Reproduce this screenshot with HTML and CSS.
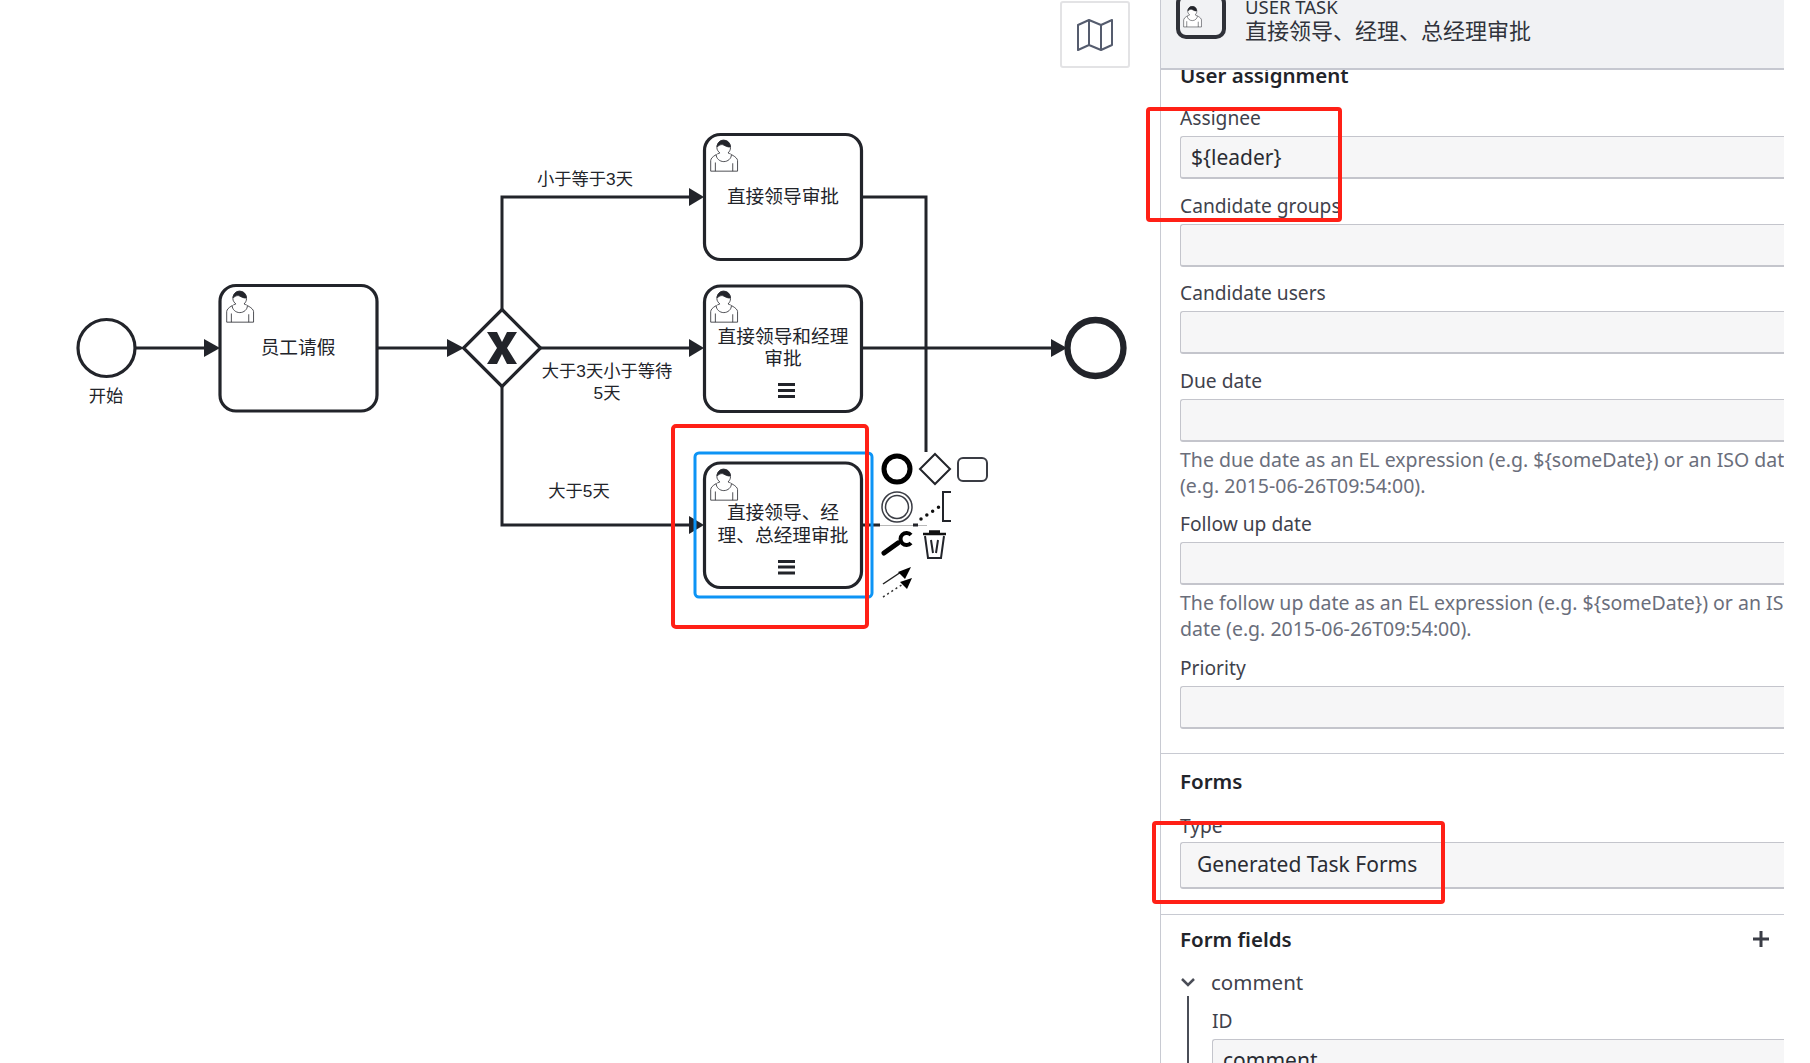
FILE: index.html
```html
<!DOCTYPE html>
<html lang="zh">
<head>
<meta charset="utf-8">
<title>BPMN editor</title>
<link rel="stylesheet" href="styles.css">
</head>
<body>
<div class="page">
  <main class="canvas">
    <svg class="diagram" width="1160" height="1063" viewBox="0 0 1160 1063" xmlns="http://www.w3.org/2000/svg">
      <defs>
        <g id="user-marker">
          <path class="um-body" d="M0,0c.909,-.845 1.594,-2.049 1.594,-3.385 0,-2.554 -1.805,-4.622 -4.357,-4.622 -2.552,0 -4.288,2.068 -4.288,4.622 0,1.348 .974,2.562 1.896,3.405 -.529,.187 -5.669,2.097 -5.794,4.756v6.718h17v-6.718c0,-2.298 -5.528,-4.595 -6.051,-4.776zm-8,6l0,5.5m11,0l0,-5"/>
          <path class="um-body" d="M2.162,1.009c0,2.447 -2.158,4.431 -4.821,4.431 -2.665,0 -4.822,-1.981 -4.822,-4.431"/>
          <path class="um-hair" d="M-6.9,-3.8c0,0 2.251,-2.358 4.274,-1.177 2.024,1.181 4.221,1.537 4.124,.965 -.098,-.57 -.117,-3.791 -4.191,-4.136 -3.575,.001 -4.208,3.367 -4.207,4.348z"/>
        </g>
      </defs>

      <path class="flow" d="M377 348H450M502 310V197H692M540 348H692M502 387V525H692"/>
      <path class="flow" d="M135 348H206"/>
      <path class="flow" d="M862 197H926V452M862 348H1052"/>
      <path class="flow-dim" d="M872 525.500H927"/>
      <path class="flow" d="M862 525H880M913 525H918"/>

      <path class="head" d="M204 339L220 348 204 357z"/>
      <path class="head" d="M447 339L464 348 447 357z"/>
      <path class="head" d="M689 188L704 197 689 206z"/>
      <path class="head" d="M689 339L704 348 689 357z"/>
      <path class="head" d="M689 516L704 525 689 534z"/>
      <path class="head" d="M1051 339L1067 348 1051 357z"/>

      <circle class="shape" cx="106.500" cy="348" r="28.500"/>
      <circle class="shape end" cx="1095.500" cy="348" r="28"/>
      <rect class="shape" x="220" y="285.500" width="157" height="125.500" rx="16"/>
      <rect class="shape" x="704.500" y="134.500" width="157" height="125" rx="16"/>
      <rect class="shape" x="704.500" y="286" width="157" height="125.500" rx="16"/>
      <rect class="shape" x="704.500" y="463" width="157" height="124.500" rx="16"/>

      <path class="shape" d="M502 309.500L540.500 348 502 386.500 463.500 348z"/>
      <path class="head" d="M487 332H497L502 342 507 332H517L507 348 517 364H507L502 354 497 364H487L497 348z"/>

      <use href="#user-marker" transform="translate(244 304) scale(1.58)"/>
      <use href="#user-marker" transform="translate(728 153) scale(1.58)"/>
      <use href="#user-marker" transform="translate(728 304) scale(1.58)"/>
      <use href="#user-marker" transform="translate(728 482) scale(1.58)"/>

      <path class="bars" d="M778 384.500H795M778 390.500H795M778 396.500H795"/>
      <path class="bars" d="M778 561.500H795M778 567H795M778 573H795"/>

      <text class="task-text" x="298" y="347">员工请假</text>
      <text class="task-text" x="783" y="196">直接领导审批</text>
      <text class="task-text" x="783" y="336">直接领导和经理</text>
      <text class="task-text" x="783" y="358">审批</text>
      <text class="task-text" x="783" y="512">直接领导、经</text>
      <text class="task-text" x="783" y="535">理、总经理审批</text>
      <text class="flow-text" x="106" y="396">开始</text>
      <text class="flow-text" x="585" y="179">小于等于3天</text>
      <text class="flow-text" x="607" y="371">大于3天小于等待</text>
      <text class="flow-text" x="607" y="393">5天</text>
      <text class="flow-text" x="579" y="491">大于5天</text>

      <rect class="select-box" x="695" y="453" width="177" height="144" rx="4"/>
      <rect class="red-box" x="673" y="426" width="194" height="201" rx="3"/>

      <circle class="pad-thick" cx="897" cy="469" r="13"/>
      <path class="pad-line" d="M935 454L950 469 935 484 920 469z"/>
      <rect class="pad-rect" x="958" y="458" width="29" height="23" rx="5"/>
      <circle class="pad-thin" cx="897" cy="507" r="15"/>
      <circle class="pad-thin" cx="897" cy="507" r="11.500"/>
      <path class="pad-dots" d="M921 519L939 507"/>
      <path class="pad-line" d="M951 492H943V521H951"/>
      <path class="pad-wrench" d="M884 553L898 543"/>
      <path class="pad-c" d="M911 535A6 6 0 1 0 911 543"/>
      <path class="pad-lid" d="M923 534H946M929 531.500H940"/>
      <path class="pad-line" d="M925 536L928 558H941L944 536M931 540L933 553M938 540L936 553"/>
      <path class="pad-thinline" d="M883 584L901 572"/>
      <path class="head-k" d="M911 567L898 572 905 579z"/>
      <path class="pad-dots-sm" d="M883 597L903 584"/>
      <path class="head-k" d="M912 578L900 582 907 589z"/>
    </svg>

    <button class="minimap" type="button" aria-label="Toggle minimap">
      <svg width="36" height="32" viewBox="0 0 36 32" xmlns="http://www.w3.org/2000/svg">
        <path class="map-icon" d="M1 6L12 1 24 6 35 1V26L24 31 12 26 1 31zM12 1V26M24 6V31"/>
      </svg>
    </button>
  </main>

  <aside class="panel">
    <header class="panel-head">
      <div class="head-icon">
        <svg width="19" height="22" viewBox="-11.500 -8.500 18 21" xmlns="http://www.w3.org/2000/svg"><use href="#user-marker"/></svg>
      </div>
      <div class="head-text">
        <div class="head-type">USER TASK</div>
        <div class="head-name">直接领导、经理、总经理审批</div>
      </div>
    </header>

    <section class="group group-first">
      <h2 class="group-title">User assignment</h2>
      <div class="field"><label class="label">Assignee</label><div class="input">${leader}</div></div>
      <div class="field"><label class="label">Candidate groups</label><div class="input"></div></div>
      <div class="field"><label class="label">Candidate users</label><div class="input"></div></div>
      <div class="field"><label class="label">Due date</label><div class="input"></div>
        <p class="hint">The due date as an EL expression (e.g. ${someDate}) or an ISO date<br>(e.g. 2015-06-26T09:54:00).</p></div>
      <div class="field"><label class="label">Follow up date</label><div class="input"></div>
        <p class="hint">The follow up date as an EL expression (e.g. ${someDate}) or an ISO<br>date (e.g. 2015-06-26T09:54:00).</p></div>
      <div class="field field-last"><label class="label">Priority</label><div class="input"></div></div>
    </section>

    <section class="group group-forms">
      <h2 class="group-title">Forms</h2>
      <div class="field field-last"><label class="label">Type</label><div class="input select">Generated Task Forms</div></div>
    </section>

    <section class="group group-fields">
      <div class="group-row">
        <h2 class="group-title">Form fields</h2>
        <svg class="plus" width="18" height="18" viewBox="0 0 18 18" xmlns="http://www.w3.org/2000/svg"><path d="M9 1V17M1 9H17"/></svg>
      </div>
      <div class="item-row">
        <svg class="chevron" width="16" height="12" viewBox="0 0 16 12" xmlns="http://www.w3.org/2000/svg"><path d="M2 3L8 9 14 3"/></svg>
        <span class="item-name">comment</span>
      </div>
      <div class="item-body">
        <div class="field"><label class="label">ID</label><div class="input">comment</div></div>
      </div>
    </section>
  </aside>

  <div class="mark mark-assignee"></div>
  <div class="mark mark-type"></div>
</div>
</body>
</html>
```
FILE: styles.css
```css
* { box-sizing: border-box; }
html, body { margin: 0; padding: 0; background: #fff; }
.page {
  position: relative;
  display: flex;
  width: 1810px;
  height: 1063px;
  overflow: hidden;
  font-family: "Noto Sans", "Noto Sans CJK SC", sans-serif;
  color: #22242a;
}
.canvas { position: relative; flex: 0 0 1160px; height: 1063px; }
.diagram { display: block; }

.flow { fill: none; stroke: #22242a; stroke-width: 3; }
.flow-dim { fill: none; stroke: #b9b9b9; stroke-width: 1; }
.head { fill: #22242a; }
.head-k { fill: #000; }
.shape { fill: #fff; stroke: #22242a; stroke-width: 3.200; }
.shape.end { stroke-width: 6.300; }
.um-body { fill: #fff; stroke: #22242a; stroke-width: .5; }
.um-hair { fill: #22242a; stroke: #22242a; stroke-width: .5; }
.bars { fill: none; stroke: #22242a; stroke-width: 3; }
.task-text, .flow-text {
  font-family: "Liberation Sans", "Noto Sans CJK SC", sans-serif;
  text-anchor: middle;
  dominant-baseline: central;
  fill: #22242a;
}
.task-text { font-size: 18.700px; }
.flow-text { font-size: 17.300px; }
.select-box { fill: none; stroke: #0d94f5; stroke-width: 3; }
.red-box { fill: none; stroke: #ff2016; stroke-width: 4; }

.pad-thick { fill: #fff; stroke: #000; stroke-width: 5; }
.pad-line { fill: #fff; stroke: #22242a; stroke-width: 2; }
.pad-rect { fill: #fff; stroke: #3a3c44; stroke-width: 2; }
.pad-thin { fill: none; stroke: #3a3c44; stroke-width: 1.500; }
.pad-dots { fill: none; stroke: #111; stroke-width: 3.500; stroke-linecap: round; stroke-dasharray: 0 7; }
.pad-dots-sm { fill: none; stroke: #333; stroke-width: 1.500; stroke-dasharray: 2 3; }
.pad-wrench { fill: none; stroke: #000; stroke-width: 5; stroke-linecap: round; }
.pad-c { fill: none; stroke: #000; stroke-width: 4; }
.pad-lid { fill: none; stroke: #111; stroke-width: 2.500; }
.pad-thinline { fill: none; stroke: #222; stroke-width: 1.500; }

.minimap {
  position: absolute;
  left: 1060px;
  top: 1px;
  width: 70px;
  height: 67px;
  padding: 0;
  display: flex;
  align-items: center;
  justify-content: center;
  background: #fff;
  border: 2px solid #e3e3e5;
  border-radius: 3px;
}
.map-icon { fill: none; stroke: #555c6e; stroke-width: 2; stroke-linejoin: round; }

.panel {
  flex: 0 0 624px;
  height: 1063px;
  overflow: hidden;
  border-left: 1px solid #c8cad2;
}
.panel-head {
  position: relative;
  z-index: 1;
  display: flex;
  gap: 19px;
  height: 70px;
  padding-left: 15px;
  background: #f1f2f4;
  border-bottom: 2px solid #c6c8d0;
}
.head-icon {
  flex: none;
  width: 50px;
  height: 46px;
  margin-top: -7px;
  padding: 9px 0 0 3px;
  background: #f1f2f4;
  border: 4px solid #2f3138;
  border-radius: 10px;
}
.head-icon svg { display: block; }
.head-type { font-size: 18.500px; line-height: 14px; color: #30333b; }
.head-name { font-size: 22px; line-height: 30px; color: #30333b; font-family: "Noto Sans CJK SC", sans-serif; }

.group { padding-left: 19px; }
.group-first { padding-bottom: 24px; border-bottom: 1px solid #c8cad2; }
.group-first .group-title { margin-top: -5px; margin-bottom: 23px; }
.group-forms { padding-top: 17px; padding-bottom: 25px; border-bottom: 1px solid #c8cad2; }
.group-forms .group-title { margin-bottom: 25px; }
.group-fields { padding-top: 14px; }
.group-title { margin: 0; font-size: 20.500px; line-height: 20px; font-weight: 600; color: #22242a; }
.group-row { display: flex; justify-content: space-between; align-items: center; height: 20px; }
.plus { margin-right: 14px; }
.plus path { fill: none; stroke: #3a3d46; stroke-width: 3; }
.field { margin-bottom: 16.500px; }
.field-last { margin-bottom: 0; }
.label { display: block; font-size: 19.200px; line-height: 20px; margin-bottom: 8px; color: #3f424c; }
.input {
  height: 43px;
  padding-left: 10px;
  font-size: 21px;
  line-height: 40px;
  background: #f6f6f7;
  border: 1px solid #c4c5cc;
  border-right: 0;
  border-bottom-width: 2px;
  border-radius: 3px 0 0 3px;
  color: #2a2c33;
}
.select { height: 47px; margin-top: -2px; padding-left: 16px; line-height: 43px; }
.hint {
  margin: 5px 0 -1px;
  font-size: 19.500px;
  line-height: 26px;
  white-space: nowrap;
  color: #6a6e7b;
}
.item-row { display: flex; align-items: center; gap: 15px; height: 20px; margin-top: 23px; }
.chevron { flex: none; }
.chevron path { fill: none; stroke: #4a4d57; stroke-width: 2.500; }
.item-name { font-size: 20.500px; line-height: 20px; color: #3f424c; }
.item-body { margin: 4px 0 0 7px; padding: 15px 0 0 23px; border-left: 2px solid #4a4d57; }

.mark { position: absolute; border: 4px solid #ff2016; border-radius: 4px; }
.mark-assignee { left: 1146px; top: 107px; width: 196px; height: 115px; }
.mark-type { left: 1152px; top: 821px; width: 293px; height: 83px; }
```
